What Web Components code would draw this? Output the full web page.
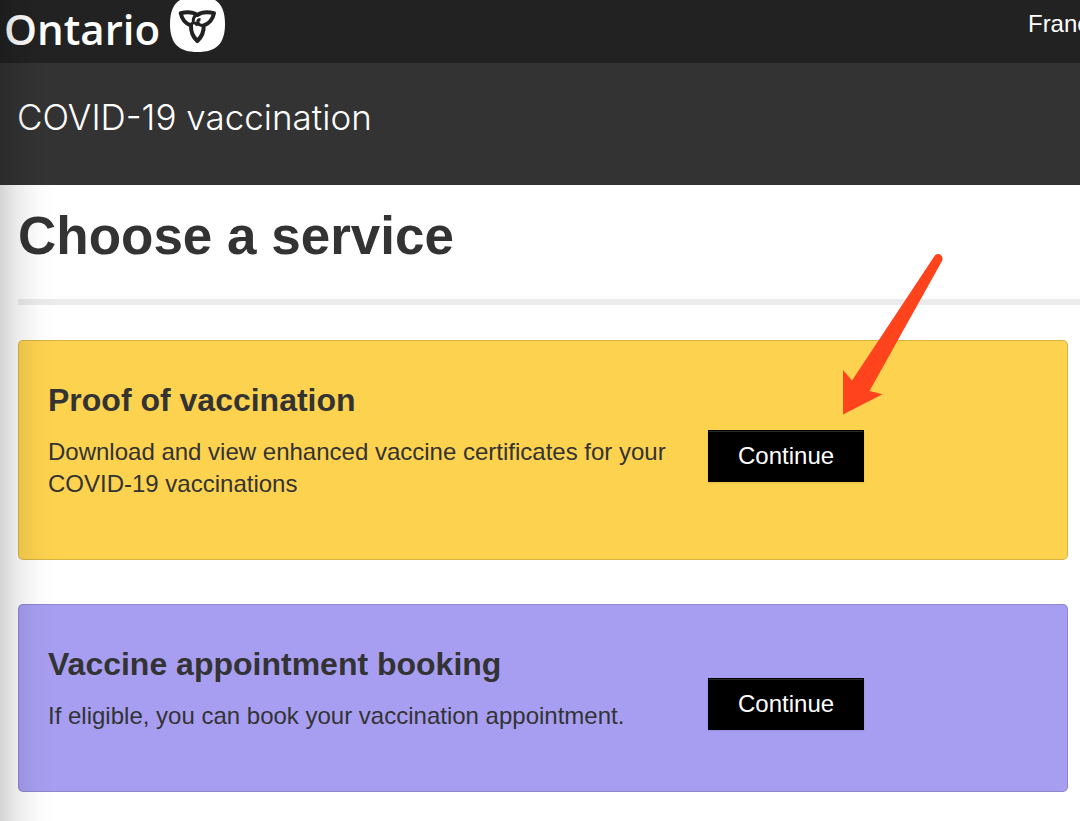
<!DOCTYPE html>
<html lang="en">
<head>
<meta charset="utf-8">
<meta name="viewport" content="width=device-width, initial-scale=1">
<title>COVID-19 vaccination</title>
<style>
body { margin: 0; background: #fff; color: #333; font-family: "Liberation Sans", Arial, sans-serif; font-size: 24px; line-height: 32px; overflow-x: hidden; }
</style>
</head>
<body>
<service-page>
  <site-header slot="header"></site-header>
  <title-bar slot="header">COVID-19 vaccination</title-bar>
  <page-heading>Choose a service</page-heading>
  <service-card style="--card: #fdd24f">
    <span slot="title">Proof of vaccination</span>
    Download and view enhanced vaccine certificates for your COVID-19 vaccinations
    <continue-button slot="action"><pointer-arrow slot="pointer"></pointer-arrow>Continue</continue-button>
  </service-card>
  <service-card style="--card: #a79ef2">
    <span slot="title">Vaccine appointment booking</span>
    If eligible, you can book your vaccination appointment.
    <continue-button slot="action">Continue</continue-button>
  </service-card>
</service-page>
<script>
const define = (name, html) => customElements.define(name, class extends HTMLElement {
  constructor() {
    super();
    this.attachShadow({ mode: "open" }).innerHTML = html;
  }
});

define("service-page", `
  <style>
    :host { display: block; position: relative; min-height: 100vh; }
    main { display: flex; flex-direction: column; padding: 17px 12px 28px 18px; }
    .edge { position: absolute; inset: 0 auto 0 0; width: 56px; pointer-events: none;
      background: linear-gradient(to right, rgba(0,0,0,.17), rgba(0,0,0,.08) 30%, rgba(0,0,0,.015) 70%, transparent); }
  </style>
  <slot name="header"></slot>
  <main><slot></slot></main>
  <div class="edge"></div>
`);

define("site-header", `
  <style>
    :host { display: block; overflow: hidden; background: #222; }
    header { display: flex; justify-content: space-between; align-items: flex-start; height: 63px; margin-right: -40px; padding-left: 4px; }
    a { color: #fff; text-decoration: none; }
    .brand { display: flex; gap: 9px; font: 600 42px/58px "Open Sans", sans-serif; }
    .lang { padding-top: 8px; }
    svg { display: block; }
  </style>
  <header>
    <a class="brand" href="#">Ontario
      <svg width="57" height="56" viewBox="169 0 57 56" aria-hidden="true">
        <path d="M197.500 -4C216 -4 225 4 225 24S216 52 197.500 52S170 44 170 24S179 -4 197.500 -4Z" fill="#fff"/>
        <g fill="none" stroke="#222" stroke-width="4" stroke-linejoin="round">
          <path d="M197.300 15C192 11.500 186 12 180.700 13.200C181.700 18 184.500 23.500 191 25.500C190.800 31 192.500 36.500 197.300 41C202 36.500 204 31 203.700 25.500C210 23.500 213 18 214 13.200C208.500 12 202.500 11.500 197.300 15Z"/>
          <path d="M197.300 14C194.500 16 192.800 18.500 193.300 21.500M191 25.500C192 22 195 21.500 197.500 25.500M203.700 25.500C200 25.500 197.800 24 197.800 21.500C198 20 199 19.500 200.500 19.500" stroke-width="3"/>
        </g>
      </svg>
    </a>
    <a class="lang" href="#" lang="fr">Français</a>
  </header>
`);

define("title-bar", `
  <style>
    :host { display: block; padding: 32px 17px 46px; background: #333; color: #fff; font: 300 35px/44px Inter, "Liberation Sans", sans-serif; }
  </style>
  <slot></slot>
`);

define("page-heading", `
  <style>
    :host { display: block; margin: 0 -12px 35px 0; padding-bottom: 29px; border-bottom: 6px solid #ebebeb; }
    h1 { margin: 0; font-size: 53px; line-height: 68px; }
  </style>
  <h1><slot></slot></h1>
`);

define("service-card", `
  <style>
    :host { display: block; }
    :host(:not(:last-of-type)) { margin-bottom: 44px; }
    section { display: grid; grid-template-columns: 2fr 1fr; align-items: center; padding: 0 29px;
      background: var(--card); border: 1px solid rgba(0,0,0,.15); border-radius: 5px; }
    .text { padding: 39px 16px 59px 0; }
    .action { padding-top: 12px; }
    h2 { margin: 0 0 16px; font-size: 32px; line-height: 40px; }
    p { margin: 0; }
  </style>
  <section>
    <div class="text"><h2><slot name="title"></slot></h2><p><slot></slot></p></div>
    <div class="action"><slot name="action"></slot></div>
  </section>
`);

define("continue-button", `
  <style>
    :host { display: inline-block; position: relative; vertical-align: top; }
    button { display: block; height: 52px; padding: 0 29px; border: 1px solid #000; border-radius: 0; background: #000; color: #fff;
      font: inherit; box-shadow: inset 0 1px #2a2a2a, 0 1px 2px rgba(0,0,0,.1); cursor: pointer; }
  </style>
  <button type="button"><slot></slot></button>
  <slot name="pointer"></slot>
`);

define("pointer-arrow", `
  <style>
    :host { position: absolute; left: 134px; bottom: 67px; pointer-events: none; }
    svg { display: block; }
  </style>
  <svg width="102" height="162" viewBox="842 253 102 162" aria-hidden="true">
    <path d="M934.500 256C938 251.500 944.500 255.500 942 261L869.500 391L882.500 394.300L843 414.500V370L852 380.500Z" fill="#ff431c"/>
  </svg>
`);
</script>
</body>
</html>
